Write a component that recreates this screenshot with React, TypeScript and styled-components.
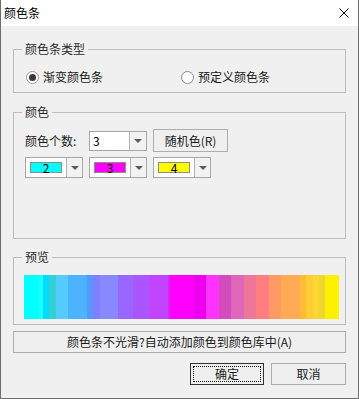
import React from "react";
import styled, { createGlobalStyle } from "styled-components";

const Global = createGlobalStyle`
  html, body { margin: 0; padding: 0; background: #ffffff; }
  body {
    font-family: "Noto Sans CJK SC", "Microsoft YaHei", sans-serif;
    font-size: 12px;
    color: #1a1a1a;
  }
  * { box-sizing: border-box; }
`;

const Window = styled.div`
  width: 359px;
  height: 399px;
  border: 1px solid #6e6e6e;
  border-top: none;
  display: flex;
  flex-direction: column;
  background: #f0f0f0;
`;

const TitleBar = styled.div`
  height: 26px;
  flex: none;
  background: #ffffff;
  display: flex;
  align-items: center;
  justify-content: space-between;
  padding: 0 9px 0 3px;
`;

const Title = styled.span`
  font-size: 12px;
  line-height: 16px;
  color: #000;
`;

const CloseIcon = styled.svg`
  width: 10px;
  height: 10px;
  display: block;
`;

const Body = styled.div`
  flex: 1;
  display: flex;
  flex-direction: column;
  padding: 23px 12px 0;
`;

const Group = styled.div<{ $h: number; $mb: number }>`
  height: ${(p) => p.$h}px;
  margin-bottom: ${(p) => p.$mb}px;
  border: 1px solid #bdbdbd;
  display: flex;
  flex-direction: column;
  flex: none;
`;

const GroupTitle = styled.span`
  display: block;
  width: fit-content;
  margin: -9px 0 0 8px;
  padding: 0 3px;
  line-height: 16px;
  background: #f0f0f0;
  color: #2a2a2a;
`;

const RadioRow = styled.div`
  margin-top: 12px;
  padding-left: 12px;
  display: grid;
  grid-template-columns: 155px 1fr;
  height: 16px;
  align-items: center;
`;

const Radio = styled.label`
  display: flex;
  align-items: center;
  gap: 4px;
  line-height: 16px;
  color: #1a1a1a;
`;

const RadioCircle = styled.span<{ $on?: boolean }>`
  width: 13px;
  height: 13px;
  border-radius: 50%;
  border: 1px solid ${(p) => (p.$on ? "#9a9a9a" : "#8a8a8a")};
  background: #ffffff;
  display: flex;
  align-items: center;
  justify-content: center;
  flex: none;
  &::after {
    content: "";
    display: ${(p) => (p.$on ? "block" : "none")};
    width: 7px;
    height: 7px;
    border-radius: 50%;
    background: #3a3a3a;
  }
`;

const FieldRow = styled.div<{ $mt: number; $h: number }>`
  margin-top: ${(p) => p.$mt}px;
  height: ${(p) => p.$h}px;
  padding-left: 11px;
  display: flex;
  align-items: center;
  gap: 6px;
`;

const FieldLabel = styled.span`
  width: 58px;
  line-height: 16px;
  color: #1a1a1a;
`;

const Combo = styled.div<{ $h: number }>`
  width: 58px;
  height: ${(p) => p.$h}px;
  border: 1px solid #a6a6a6;
  background: #ffffff;
  display: flex;
  flex: none;
`;

const ComboText = styled.div`
  flex: 1;
  display: flex;
  align-items: center;
  padding-left: 3px;
  line-height: 16px;
  color: #000;
`;

const ComboSwatchArea = styled.div`
  flex: 1;
  display: flex;
  align-items: center;
  padding-left: 4px;
`;

const Swatch = styled.div<{ $c: string }>`
  width: 32px;
  height: 11px;
  border: 1px solid #8c8c8c;
  background: ${(p) => p.$c};
  display: flex;
  align-items: center;
  justify-content: center;
  font-size: 12px;
  line-height: 11px;
  color: #000;
`;

const ArrowBox = styled.div<{ $w: number }>`
  width: ${(p) => p.$w}px;
  border-left: 1px solid #b4b4b4;
  background: #f2f2f2;
  display: flex;
  align-items: center;
  justify-content: center;
  flex: none;
  &::after {
    content: "";
    width: 0;
    height: 0;
    border-left: 4px solid transparent;
    border-right: 4px solid transparent;
    border-top: 4px solid #5c5c5c;
  }
`;

const Button = styled.button<{ $w?: number; $h: number; $default?: boolean }>`
  width: ${(p) => (p.$w ? `${p.$w}px` : "100%")};
  height: ${(p) => p.$h}px;
  flex: none;
  border: 1px solid ${(p) => (p.$default ? "#333333" : "#adadad")};
  background: #efefef;
  font-family: inherit;
  font-size: 12px;
  line-height: 16px;
  color: #1a1a1a;
  padding: 0;
  display: flex;
  align-items: center;
  justify-content: center;
  outline: ${(p) => (p.$default ? "1px dotted #111" : "none")};
  outline-offset: -4px;
`;

const PreviewBar = styled.div`
  margin: 10px 0 0 10px;
  width: 315px;
  height: 44px;
  display: flex;
`;

const Stripe = styled.div<{ $w: number; $c: string }>`
  width: ${(p) => p.$w}px;
  height: 100%;
  background: ${(p) => p.$c};
  flex: none;
`;

const ButtonRow = styled.div`
  margin-top: 10px;
  display: flex;
  justify-content: flex-end;
  gap: 7px;
`;

const stripeStops: [number, string][] = [
  [24, "#00FFFF"],
  [39, "#1CFFFF"],
  [43, "#00DDFF"],
  [49, "#33D0D5"],
  [56, "#55CCFF"],
  [68, "#4DB3FF"],
  [87, "#5599FF"],
  [93, "#8080FF"],
  [100, "#8888FF"],
  [118, "#9966FF"],
  [133, "#AA55FF"],
  [149, "#C244FF"],
  [168, "#DD22FF"],
  [170, "#FF00FF"],
  [194, "#EE00EE"],
  [206, "#FF33FF"],
  [219, "#D24DBB"],
  [231, "#E066BB"],
  [244, "#EE7799"],
  [256, "#FF7F80"],
  [269, "#FF9966"],
  [281, "#FFAA55"],
  [300, "#FFBB33"],
  [306, "#FFCC33"],
  [313, "#FFD633"],
  [319, "#EED830"],
  [325, "#FFF000"],
];
const stripeEnd = 339;

const stripes = stripeStops.map(([x, c], i) => ({
  w: (i + 1 < stripeStops.length ? stripeStops[i + 1][0] : stripeEnd) - x,
  c,
}));

const colorCombos = [
  { c: "#00FFFF", n: "2" },
  { c: "#FF00FF", n: "3" },
  { c: "#FFFF00", n: "4" },
];

export default function App() {
  return (
    <>
      <Global />
      <Window>
        <TitleBar>
          <Title>颜色条</Title>
          <CloseIcon viewBox="0 0 10 10">
            <path d="M0.5 0.5 L9.5 9.5 M9.5 0.5 L0.5 9.5" stroke="#000" strokeWidth="1" fill="none" />
          </CloseIcon>
        </TitleBar>
        <Body>
          <Group $h={44} $mb={19}>
            <GroupTitle>颜色条类型</GroupTitle>
            <RadioRow>
              <Radio>
                <RadioCircle $on />
                渐变颜色条
              </Radio>
              <Radio>
                <RadioCircle />
                预定义颜色条
              </Radio>
            </RadioRow>
          </Group>

          <Group $h={127} $mb={18}>
            <GroupTitle>颜色</GroupTitle>
            <FieldRow $mt={9} $h={23}>
              <FieldLabel>颜色个数:</FieldLabel>
              <Combo $h={20}>
                <ComboText>3</ComboText>
                <ArrowBox $w={17} />
              </Combo>
              <Button $w={75} $h={23}>随机色(R)</Button>
            </FieldRow>
            <FieldRow $mt={5} $h={21}>
              {colorCombos.map((cc) => (
                <Combo key={cc.n} $h={21}>
                  <ComboSwatchArea>
                    <Swatch $c={cc.c}>{cc.n}</Swatch>
                  </ComboSwatchArea>
                  <ArrowBox $w={16} />
                </Combo>
              ))}
            </FieldRow>
          </Group>

          <Group $h={68} $mb={6}>
            <GroupTitle>预览</GroupTitle>
            <PreviewBar>
              {stripes.map((s, i) => (
                <Stripe key={i} $w={s.w} $c={s.c} />
              ))}
            </PreviewBar>
          </Group>

          <Button $h={22}>颜色条不光滑?自动添加颜色到颜色库中(A)</Button>

          <ButtonRow>
            <Button $w={74} $h={22} $default>确定</Button>
            <Button $w={75} $h={22}>取消</Button>
          </ButtonRow>
        </Body>
      </Window>
    </>
  );
}
